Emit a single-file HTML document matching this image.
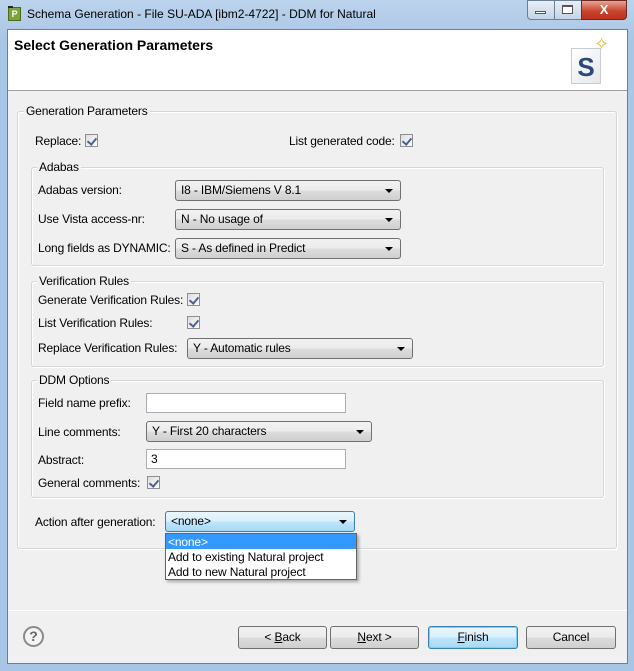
<!DOCTYPE html>
<html><head><meta charset="utf-8"><style>
*{margin:0;padding:0;box-sizing:border-box}
body{width:634px;height:671px;overflow:hidden;position:relative;font-family:"Liberation Sans",sans-serif;font-size:12px;letter-spacing:-0.15px;color:#000;background:linear-gradient(180deg,#bcd3ec 0,#aac6e6 40px,#a9c5e6 100%)}
.a{position:absolute;white-space:nowrap}
.inner{position:absolute;left:7px;top:29px;width:621px;height:635px;background:#f0f0f0;border:1px solid #6f7f92}
.hdr{position:absolute;left:8px;top:30px;width:619px;height:61px;background:#fff;border-bottom:1px solid #a0a0a0}
.grp{position:absolute;border:1px solid #d5d5d5;border-radius:3px;box-shadow:inset 1px 1px 0 #fff,1px 1px 0 #fff}
.gl{position:absolute;background:#f0f0f0;padding:0 2px;line-height:14px}
.cb{position:absolute;width:13px;height:13px;border:1px solid #8e8f8f;background:linear-gradient(135deg,#dcdcdc,#fff);}
.cb:after{content:"";position:absolute;left:3px;top:1px;width:4px;height:7px;border:solid #4a5f97;border-width:0 2px 2px 0;transform:rotate(40deg)}
.combo{position:absolute;height:21px;border:1px solid #707070;border-radius:3px;background:linear-gradient(#f2f2f2 0,#ebebeb 50%,#dddddd 51%,#cfcfcf 100%);padding-left:5px;line-height:19px}
.combo:after{content:"";position:absolute;right:7px;top:8px;border:4px solid transparent;border-top:4px solid #000;border-bottom:0}
.txt{position:absolute;height:20px;border:1px solid #abadb3;background:#fff;padding-left:4px;line-height:18px}
.btn{position:absolute;top:626px;height:23px;border:1px solid #707070;border-radius:3px;background:linear-gradient(#f2f2f2 0,#ebebeb 50%,#dddddd 51%,#cfcfcf 100%);text-align:center;line-height:21px}
u{text-decoration:underline}
</style></head><body>
<div class="a" style="left:8px;top:7px;width:13px;height:14px;background:#7aa33a;border:1px solid #4d6b1f;color:#fff;font-size:9px;font-weight:bold;text-align:center;line-height:12px">P</div>
<div class="a" style="left:8px;top:6px;width:5px;height:2px;background:#223"></div>
<div class="a" style="left:27px;top:7px;font-size:12px;color:#000;letter-spacing:0">Schema Generation - File SU-ADA [ibm2-4722] - DDM for Natural</div>
<div class="a" style="left:527px;top:0;width:28px;height:20px;border:1px solid #6d7f95;border-radius:0 0 0 4px;background:linear-gradient(#e8f0f8,#c4d4e6)"></div>
<div class="a" style="left:535px;top:11px;width:11px;height:3px;border:1px solid #555;background:#fff"></div>
<div class="a" style="left:554px;top:0;width:28px;height:20px;border:1px solid #6d7f95;background:linear-gradient(#e8f0f8,#c4d4e6)"></div>
<div class="a" style="left:562px;top:5px;width:11px;height:9px;border:1px solid #555;border-top-width:2px;background:#fff"></div>
<div class="a" style="left:581px;top:0;width:46px;height:20px;border:1px solid #6b2a23;border-radius:0 0 4px 0;background:linear-gradient(#e9a596,#c8462f 55%,#c0301c);color:#fff;font-weight:bold;text-align:center;line-height:18px;font-size:13px">X</div>
<div class="inner"></div>
<div class="hdr"></div>
<div class="a" style="left:14px;top:37px;font-size:14px;font-weight:bold;letter-spacing:0">Select Generation Parameters</div>
<div class="a" style="left:571px;top:48px;width:30px;height:36px;background:linear-gradient(135deg,#fff,#e4e8ec);border:1px solid #c8ccd0;color:#2a4a78;font-size:26px;font-weight:bold;text-align:center;line-height:36px">S</div>
<div class="a" style="left:594px;top:34px;color:#e8b84a;font-size:18px">✧</div>

<div class="grp" style="left:17px;top:111px;width:600px;height:438px"></div>
<div class="gl" style="left:24px;top:104px">Generation Parameters</div>
<div class="a" style="left:35px;top:134px">Replace:</div><div class="cb" style="left:85px;top:134px"></div>
<div class="a" style="left:289px;top:134px">List generated code:</div><div class="cb" style="left:400px;top:134px"></div>

<div class="grp" style="left:31px;top:167px;width:573px;height:99px"></div>
<div class="gl" style="left:37px;top:160px">Adabas</div>
<div class="a" style="left:38px;top:183px">Adabas version:</div><div class="combo" style="left:175px;top:180px;width:226px">I8 - IBM/Siemens V 8.1</div>
<div class="a" style="left:38px;top:212px">Use Vista access-nr:</div><div class="combo" style="left:175px;top:209px;width:226px">N - No usage of</div>
<div class="a" style="left:38px;top:241px">Long fields as DYNAMIC:</div><div class="combo" style="left:175px;top:238px;width:226px">S - As defined in Predict</div>

<div class="grp" style="left:31px;top:281px;width:573px;height:86px"></div>
<div class="gl" style="left:37px;top:274px">Verification Rules</div>
<div class="a" style="left:38px;top:293px">Generate Verification Rules:</div><div class="cb" style="left:187px;top:293px"></div>
<div class="a" style="left:38px;top:316px">List Verification Rules:</div><div class="cb" style="left:187px;top:316px"></div>
<div class="a" style="left:38px;top:341px">Replace Verification Rules:</div><div class="combo" style="left:187px;top:338px;width:226px">Y - Automatic rules</div>

<div class="grp" style="left:31px;top:380px;width:573px;height:118px"></div>
<div class="gl" style="left:37px;top:373px">DDM Options</div>
<div class="a" style="left:38px;top:396px">Field name prefix:</div><div class="txt" style="left:146px;top:393px;width:200px"></div>
<div class="a" style="left:38px;top:425px">Line comments:</div><div class="combo" style="left:146px;top:421px;width:226px">Y - First 20 characters</div>
<div class="a" style="left:38px;top:453px">Abstract:</div><div class="txt" style="left:146px;top:449px;width:200px">3</div>
<div class="a" style="left:38px;top:476px">General comments:</div><div class="cb" style="left:147px;top:476px"></div>

<div class="a" style="left:35px;top:515px">Action after generation:</div>
<div class="combo" style="left:165px;top:511px;width:190px;border-color:#3c7fb1;background:linear-gradient(#eaf6fd 0,#d9f0fc 50%,#bee6fd 51%,#a7d9f5 100%)">&lt;none&gt;</div>
<div class="a" style="left:165px;top:533px;width:192px;height:47px;background:#fff;border:1px solid #646464;box-shadow:2px 2px 3px rgba(0,0,0,.3)"></div>
<div class="a" style="left:166px;top:534px;width:190px;height:15px;background:#3399ff"></div>
<div class="a" style="left:168px;top:535px;color:#fff">&lt;none&gt;</div>
<div class="a" style="left:168px;top:550px">Add to existing Natural project</div>
<div class="a" style="left:168px;top:565px">Add to new Natural project</div>

<div class="a" style="left:8px;top:610px;width:619px;height:1px;background:#a0a0a0;border-bottom:1px solid #fff"></div>
<div class="a" style="left:23px;top:626px;width:21px;height:21px;border:2px solid #8a8a8a;border-radius:50%;background:#f4f4f4;color:#666;font-weight:bold;font-size:14px;text-align:center;line-height:17px">?</div>
<div class="btn" style="left:238px;width:89px">&lt; <u>B</u>ack</div>
<div class="btn" style="left:330px;width:89px"><u>N</u>ext &gt;</div>
<div class="btn" style="left:428px;width:90px;border-color:#3c7fb1;background:linear-gradient(#eaf6fd 0,#d9f0fc 50%,#bee6fd 51%,#a7d9f5 100%);box-shadow:inset 0 0 0 1px #7ad3f7"><u>F</u>inish</div>
<div class="btn" style="left:526px;width:90px">Cancel</div>
</body></html>
